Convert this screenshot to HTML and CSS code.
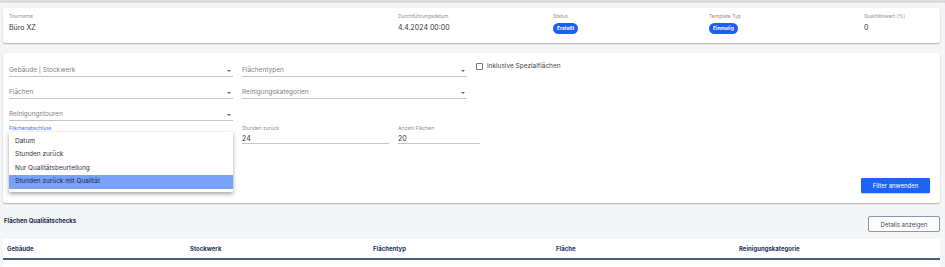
FILE: index.html
```html
<!DOCTYPE html>
<html lang="de">
<head>
<meta charset="utf-8">
<title>Qualitätschecks</title>
<link rel="stylesheet" href="styles.css">
</head>
<body>
<div class="topstrip"></div>
<main class="page">
  <section class="card info">
    <div class="info-item">
      <div class="label">Tourname</div>
      <div class="value">Büro XZ</div>
    </div>
    <div class="info-item">
      <div class="label">Durchführungsdatum</div>
      <div class="value">4.4.2024 00:00</div>
    </div>
    <div class="info-item">
      <div class="label">Status</div>
      <div class="value"><span class="badge">Erstellt</span></div>
    </div>
    <div class="info-item">
      <div class="label">Template Typ</div>
      <div class="value"><span class="badge">Einmalig</span></div>
    </div>
    <div class="info-item">
      <div class="label">Qualitätswert (%)</div>
      <div class="value">0</div>
    </div>
  </section>

  <section class="card filters">
    <div class="row">
      <div class="select w1"><span>Gebäude | Stockwerk</span><i class="caret"></i></div>
      <div class="select w2"><span>Flächentypen</span><i class="caret"></i></div>
      <label class="check"><span class="box"></span>inklusive Spezialflächen</label>
    </div>
    <div class="row">
      <div class="select w1"><span>Flächen</span><i class="caret"></i></div>
      <div class="select w2"><span>Reinigungskategorien</span><i class="caret"></i></div>
    </div>
    <div class="row">
      <div class="select w1"><span>Reinigungstouren</span><i class="caret"></i></div>
    </div>
    <div class="row row-last">
      <div class="field w1 open">
        <div class="flabel active">Flächenabschluss</div>
        <ul class="menu">
          <li>Datum</li>
          <li>Stunden zurück</li>
          <li>Nur Qualitätsbeurteilung</li>
          <li class="selected">Stunden zurück mit Qualität</li>
        </ul>
      </div>
      <div class="field w3">
        <div class="flabel">Stunden zurück</div>
        <div class="fvalue">24</div>
      </div>
      <div class="field w4">
        <div class="flabel">Anzahl Flächen</div>
        <div class="fvalue">20</div>
      </div>
    </div>
    <div class="actions">
      <button class="btn-primary">Filter anwenden</button>
    </div>
  </section>

  <div class="section-head">
    <h2>Flächen Qualitätschecks</h2>
    <button class="btn-outline">Details anzeigen</button>
  </div>

  <div class="table">
    <div class="thead">
      <div>Gebäude</div>
      <div>Stockwerk</div>
      <div>Flächentyp</div>
      <div>Fläche</div>
      <div>Reinigungskategorie</div>
    </div>
    <div class="tbody"></div>
  </div>
</main>
</body>
</html>
```

FILE: styles.css
```css
* { box-sizing: border-box; }
html, body { margin: 0; padding: 0; }
body {
  background: #f4f5f7;
  font-family: Inter, "Noto Sans", sans-serif;
  color: #333;
  width: 945px;
  height: 267px;
  overflow: hidden;
}
.topstrip {
  height: 3px;
  background: linear-gradient(#e6e6e6, #d3d3d3 60%, #e9e9ea);
}
.page {
  padding: 5px 5px 0 3px;
}
.card {
  background: #fff;
  border-radius: 2px;
  box-shadow: 0 1px 1.5px rgba(0,0,0,0.28);
}
.info {
  height: 35px;
  padding: 5px 6px 0 6px;
  display: grid;
  grid-template-columns: 389px 155px 156px 155px 1fr;
}
.label {
  font-size: 5px;
  line-height: 6px;
  color: #8f8f8f;
}
.value {
  margin-top: 4px;
  font-size: 7px;
  line-height: 10px;
  color: #333;
  display: flex;
  align-items: center;
}
.badge {
  display: inline-block;
  background: #1c5ff2;
  color: #fff;
  font-size: 5px;
  font-weight: 700;
  line-height: 11px;
  height: 11px;
  padding: 0 4px;
  border-radius: 6px;
}
.filters {
  margin-top: 10px;
  height: 150px;
  padding: 10px 10px 10px 6px;
  display: flex;
  flex-direction: column;
}
.row {
  display: flex;
  gap: 9px;
  margin-bottom: 8px;
}
.row-last { margin-top: -4px; margin-bottom: 0; }
.select {
  height: 14px;
  border-bottom: 1.5px solid #c4c4c4;
  display: flex;
  align-items: center;
  justify-content: space-between;
  font-size: 6.5px;
  color: #808080;
  padding-right: 2px;
}
.w1 { width: 224px; }
.w2 { width: 225px; }
.w3 { width: 147px; }
.w4 { width: 82px; }
.caret {
  width: 0; height: 0;
  border-left: 2px solid transparent;
  border-right: 2px solid transparent;
  border-top: 2px solid #666;
  margin-top: 2px;
}
.check {
  display: flex;
  align-items: center;
  gap: 4px;
  font-size: 6.5px;
  color: #444;
  height: 8px;
  margin-top: -1px;
}
.box {
  width: 7px; height: 7px;
  border: 1px solid #777;
  border-radius: 1px;
  background: #fff;
}
.field {
  position: relative;
  height: 19px;
  border-bottom: 1.5px solid #c4c4c4;
}
.flabel {
  font-size: 5px;
  line-height: 6px;
  color: #8f8f8f;
}
.flabel.active { color: #3d6ef0; }
.fvalue {
  margin-top: 3px;
  font-size: 7px;
  line-height: 9px;
  color: #333;
}
.menu {
  position: absolute;
  left: 0;
  top: 7px;
  width: 224px;
  margin: 0;
  padding: 2.5px 0 3px;
  list-style: none;
  background: #fff;
  box-shadow: 0 2px 4px rgba(0,0,0,0.35), 0 0 1px rgba(0,0,0,0.15);
  border-radius: 1px;
  z-index: 5;
}
.menu li {
  height: 13.5px;
  line-height: 13.5px;
  padding-left: 6px;
  font-size: 6.5px;
  color: #333;
}
.menu li.selected {
  background: #78a1f7;
  color: #1d2b4b;
}
.actions {
  margin-top: auto;
  display: flex;
  justify-content: flex-end;
}
.btn-primary {
  width: 69px;
  height: 15px;
  border: 0;
  border-radius: 1px;
  background: #1e64f4;
  color: #fff;
  font-family: inherit;
  font-size: 6px;
  padding: 0;
  box-shadow: 0 1px 1px rgba(0,0,0,0.2);
}
.section-head {
  display: flex;
  justify-content: space-between;
  align-items: center;
  margin-top: 13px;
  padding-left: 1px;
}
.section-head h2 {
  margin: 0;
  font-size: 6px;
  font-weight: 700;
  color: #1f2d52;
  position: relative;
  top: -4px;
}
.btn-outline {
  width: 72px;
  height: 16px;
  background: #fff;
  border: 1px solid #8d96a8;
  border-radius: 2px;
  font-family: inherit;
  font-size: 6px;
  color: #444b5a;
  padding: 0;
}
.table {
  margin-top: 7px;
  background: #fff;
}
.thead {
  display: grid;
  grid-template-columns: repeat(5, 183px);
  height: 21px;
  align-items: center;
  padding-left: 4px;
  border-bottom: 2px solid #4b5a84;
  font-size: 6px;
  font-weight: 700;
  color: #24345e;
}
.tbody { height: 20px; background: #fff; }
```
